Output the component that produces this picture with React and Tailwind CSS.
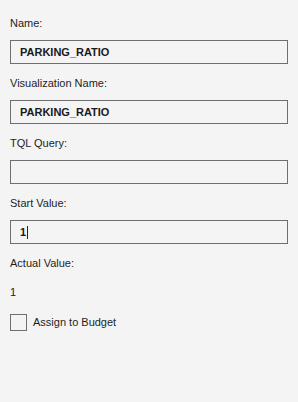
import { useState } from 'react';

function Field({ label, value, caret }) {
    return (
        <div className="flex flex-col">
            <label className="text-[11px] leading-[16px] text-[#1e1e1e] mb-[9px]">{label}</label>
            <div className="h-[24px] border border-[#6f6f6f] bg-[#f4f4f4] flex items-center px-[9px] mb-[11px]">
                <span className="text-[11px] font-bold text-[#1a1a1a] leading-none">{value}</span>
                {caret && <span className="w-px h-[13px] bg-[#222] ml-[1px]" />}
            </div>
        </div>
    );
}

function App() {
    const [assign, setAssign] = useState(false);

    return (
        <div
            className="w-[298px] h-[402px] bg-[#f4f4f4] px-[10px] pt-[15px]"
            style={{ fontFamily: '"Liberation Sans", Arial, sans-serif' }}
        >
            <Field label="Name:" value="PARKING_RATIO" />
            <Field label="Visualization Name:" value="PARKING_RATIO" />
            <Field label="TQL Query:" value="" />
            <Field label="Start Value:" value="1" caret />

            <div className="text-[11px] leading-[16px] text-[#1e1e1e]">Actual Value:</div>
            <div className="text-[11px] leading-[16px] text-[#1e1e1e] mt-[13px]">1</div>

            <div className="flex items-center mt-[14px] gap-[6px] cursor-pointer" onClick={() => setAssign(!assign)}>
                <div className="w-[17px] h-[17px] border border-[#6f6f6f] bg-[#f4f4f4] flex items-center justify-center">
                    {assign && <span className="text-[11px] leading-none">✓</span>}
                </div>
                <span className="text-[11px] text-[#1e1e1e]">Assign to Budget</span>
            </div>
        </div>
    );
}

export default App;
